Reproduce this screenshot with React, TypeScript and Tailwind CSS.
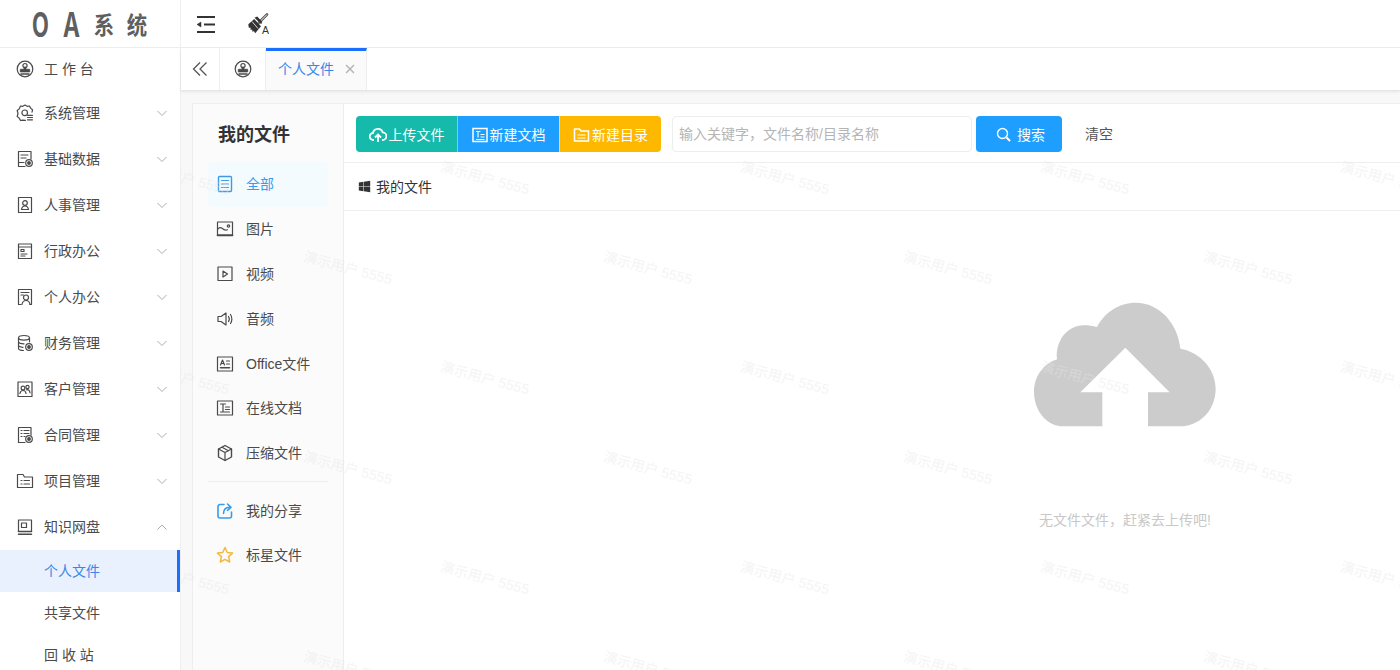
import type { ReactNode } from 'react';
import { FaWindows } from 'react-icons/fa';

const FONT = 'font-["Liberation_Sans","Noto_Sans_CJK_SC",sans-serif]';

function Ico({ children, size = 18, className = '' }: { children: ReactNode; size?: number; className?: string }) {
  return (
    <svg
      width={size}
      height={size}
      viewBox="0 0 18 18"
      fill="none"
      stroke="currentColor"
      strokeWidth="1.2"
      strokeLinecap="round"
      strokeLinejoin="round"
      className={`shrink-0 ${className}`}
    >
      {children}
    </svg>
  );
}

const HomeIcon = () => (
  <Ico>
    <circle cx="9" cy="9" r="7.8" />
    <circle cx="9" cy="5.600" r="2.100" />
    <path d="M8 7.500V9.300H4.300v2.600h9.400V9.300H10V7.500z" fill="currentColor" strokeWidth="0.800" />
    <path d="M5 14h8" strokeWidth="1.500" />
  </Ico>
);

const icons: Record<string, ReactNode> = {
  sys: (
    <Ico>
      <path d="M9.500 16.300l-3-.2-2 .4-1.300-2.400-2-1.600.8-3-.8-3 2-1.600L4.500 2l2.300.3L9 1l2.200 1.300L13.500 2l1.300 2.400 1.700 1.400-.5 2.400" />
      <circle cx="8.700" cy="8.800" r="2.800" />
      <path d="M11.500 11.300h5M11.500 13.500h5M11.500 15.800h5" />
    </Ico>
  ),
  base: (
    <Ico>
      <path d="M15 9V1.500H2.500v15H9" />
      <path d="M5 5h7M5 8h5M2.500 12.500H8" />
      <circle cx="13" cy="13" r="3.300" />
      <circle cx="13" cy="13" r="1.300" fill="currentColor" />
    </Ico>
  ),
  hr: (
    <Ico>
      <rect x="2.500" y="1.500" width="13" height="15" />
      <circle cx="9" cy="7" r="2.300" />
      <path d="M5.500 13.500c.4-2.500 1.800-3.500 3.500-3.500s3.100 1 3.500 3.500z" />
    </Ico>
  ),
  admin: (
    <Ico>
      <rect x="2.500" y="2" width="13" height="14.500" />
      <path d="M2.500 5h13" />
      <rect x="5" y="7.500" width="3" height="2" />
      <path d="M5 12h6M5 14h4" />
    </Ico>
  ),
  person: (
    <Ico>
      <path d="M5 16.500H2.500v-15h13v15H14" />
      <path d="M5 4.500h8M5 7h2.500" />
      <circle cx="10" cy="9.500" r="2.500" />
      <path d="M6 16.500c.4-2.500 2-4 4-4s3.600 1.500 4 4" />
    </Ico>
  ),
  finance: (
    <Ico>
      <ellipse cx="8" cy="3.800" rx="5.500" ry="2.300" />
      <path d="M2.500 3.800v10.400c0 1.200 2 2.200 5 2.300M13.500 3.800v4M2.500 7.500c0 1.200 2.400 2.300 5.500 2.300M2.500 11c0 1.200 1.900 2.100 4.500 2.300" />
      <circle cx="13" cy="13" r="3.300" />
      <circle cx="13" cy="13" r="1.300" fill="currentColor" />
    </Ico>
  ),
  customer: (
    <Ico>
      <rect x="2" y="2" width="14" height="14.500" />
      <circle cx="7" cy="8" r="1.900" />
      <circle cx="11.500" cy="7" r="1.600" />
      <path d="M4 13.500c.2-2 1.300-3 3-3s2.800 1 3 3M10.500 9.800c2-.5 3.300.8 3.500 3" />
    </Ico>
  ),
  contract: (
    <Ico>
      <path d="M15 9V1.500H2.500v15H9" />
      <path d="M5 4.500h1M8 4.500h5M5 7.500h1M8 7.500h5M5 10.500h1M8 10.500h1" />
      <circle cx="13" cy="13" r="3.300" />
      <circle cx="13" cy="13" r="1.300" fill="currentColor" />
    </Ico>
  ),
  project: (
    <Ico>
      <path d="M1.500 15.500V2.500h5.500l1.500 2.500h8v10.500z" />
      <path d="M5 8.500h1M8 8.500h5.500M5 12h1M8 12h5.500" />
    </Ico>
  ),
  disk: (
    <Ico>
      <path d="M2.500 13.500V2h13v11.500" />
      <rect x="5.500" y="5" width="5" height="4.500" />
      <path d="M2.500 13.500h13M2.500 16.300h13" strokeWidth="1.500" />
    </Ico>
  ),
  all: (
    <Ico>
      <rect x="2.500" y="1.500" width="13" height="15" rx="1" strokeWidth="1.400" />
      <path d="M5.500 5.500h7M5.500 9h7M5.500 12.500h7" />
    </Ico>
  ),
  image: (
    <Ico>
      <rect x="1.500" y="2" width="15" height="13" />
      <path d="M1.500 9.500c1.500-2 3-2.500 4.500-1.200s3 2.500 5.500 1.500" />
      <circle cx="12.500" cy="6" r="1.200" />
      <path d="M1.500 15.300h15" strokeWidth="1.800" />
    </Ico>
  ),
  video: (
    <Ico>
      <rect x="2" y="2" width="14" height="13.500" />
      <path d="M7 6l4.500 3L7 12z" />
    </Ico>
  ),
  audio: (
    <Ico>
      <path d="M2 6.500h3l5-3.500v12l-5-3.500H2z" />
      <path d="M12.500 6.500c1 1.500 1 3.500 0 5M14.500 4.500c1.800 2.500 1.800 6.500 0 9" />
    </Ico>
  ),
  office: (
    <Ico>
      <rect x="1.500" y="2" width="15" height="14" />
      <path d="M4.500 10l2-5 2 5M5.200 8.500h2.600M10.500 6h3M10.500 9h3" />
      <path d="M4.500 12.800h9" strokeWidth="1.600" />
    </Ico>
  ),
  online: (
    <Ico>
      <rect x="1.500" y="2" width="15" height="14" />
      <path d="M4.500 5h5M7 5v7M9.500 8h4M9.500 10.500h4M4.500 13h9" />
    </Ico>
  ),
  zip: (
    <Ico>
      <path d="M9 1.500l6.500 3.500v8L9 16.500 2.500 13V5z" strokeWidth="1.400" />
      <path d="M2.500 5L9 8.500 15.500 5M9 8.500v8M6 3.300l6.500 3.500" />
    </Ico>
  ),
  share: (
    <Ico>
      <path d="M8 2.500H4a2 2 0 0 0-2 2v9.500a2 2 0 0 0 2 2h9.500a2 2 0 0 0 2-2V10" strokeWidth="1.600" />
      <path d="M7.500 11.500c0-4 2-6 6-6.200M11.500 2l3.500 3.300-3.500 3" strokeWidth="1.600" />
    </Ico>
  ),
  star: (
    <Ico>
      <path d="M9 1.500l2.300 5 5.200.6-3.900 3.500 1.100 5.400L9 13.300 4.300 16l1.100-5.400L1.500 7.100l5.200-.6z" strokeWidth="1.500" />
    </Ico>
  ),
};

const menu = [
  { label: '系统管理', icon: 'sys' },
  { label: '基础数据', icon: 'base' },
  { label: '人事管理', icon: 'hr' },
  { label: '行政办公', icon: 'admin' },
  { label: '个人办公', icon: 'person' },
  { label: '财务管理', icon: 'finance' },
  { label: '客户管理', icon: 'customer' },
  { label: '合同管理', icon: 'contract' },
  { label: '项目管理', icon: 'project' },
];

const fileTypes = [
  { label: '图片', icon: 'image' },
  { label: '视频', icon: 'video' },
  { label: '音频', icon: 'audio' },
  { label: 'Office文件', icon: 'office' },
  { label: '在线文档', icon: 'online' },
  { label: '压缩文件', icon: 'zip' },
];

// watermark centres, relative to the content area under the tabs
const watermarks: { x: number; y: number }[] = [];
for (const y of [87, 287, 487]) {
  for (const x of [4, 304, 604, 904, 1204]) watermarks.push({ x, y });
}
for (const y of [177, 377, 577]) {
  for (const x of [167, 467, 767, 1067]) watermarks.push({ x, y });
}

function Chevron({ up = false }: { up?: boolean }) {
  return (
    <svg width="10" height="7" viewBox="0 0 10 7" fill="none" stroke="#a6adb5" strokeWidth="1" className="ml-auto">
      <path d={up ? 'M.5 5.500L5 1l4.500 4.500' : 'M.5 1L5 5.500 9.500 1'} />
    </svg>
  );
}

function ToolButton({ color, icon, label, className = '' }: { color: string; icon: ReactNode; label: string; className?: string }) {
  return (
    <button className={`flex h-9 items-center justify-center gap-[2px] pt-[2px] text-sm text-white ${color} ${className}`}>
      {icon}
      {label}
    </button>
  );
}

export default function App() {
  return (
    <div className={`flex h-[670px] w-[1400px] flex-col overflow-hidden bg-white text-[#4a4a4a] ${FONT}`}>
      {/* header */}
      <header className="flex h-12 shrink-0 items-center border-b border-[#eeeeee]">
        <div className="flex h-full w-[181px] shrink-0 items-center border-r border-[#eeeeee] pl-[26px] font-['Noto_Sans_CJK_SC',sans-serif] font-bold text-[#5f5f5f]">
          <span className="inline-block w-[29px] scale-x-[0.68] text-center text-[33px] leading-none">O</span>
          <span className="ml-[2px] inline-block w-[29px] scale-x-[0.75] text-center text-[33px] leading-none">A</span>
          <span className="ml-[6px] inline-block w-[24px] scale-x-[0.85] text-center text-[24px] leading-none">系</span>
          <span className="ml-[9px] inline-block w-[24px] scale-x-[0.85] text-center text-[24px] leading-none">统</span>
        </div>
        <svg width="20" height="18" viewBox="0 0 20 18" fill="none" stroke="#333" strokeWidth="2" className="ml-[15px]">
          <path d="M1 2h18M8 9.500h11M1 17h18" />
          <path d="M1 9.500L5 7v5z" fill="#333" strokeWidth="0.500" />
        </svg>
        <svg width="22" height="22" viewBox="0 0 22 22" className="ml-[31px]">
          <path d="M20 1.500l-8 8" stroke="#555" strokeWidth="2.600" strokeLinecap="round" fill="none" />
          <path d="M20 1.500l-8 8" stroke="#fff" strokeWidth="0.900" fill="none" />
          <path d="M7.500 4.800l2.700-1.300 5 5.300-1 2.400z" fill="#333" />
          <path d="M1.300 11.300L7.200 6l6.800 7.300-5.800 7-1.300-2.300-1.300 .9-.5-2.300-1.600.4.100-2.300-1.800 .1z" fill="#333" />
          <path d="M5 8.500l6 7" stroke="#fff" strokeWidth="0.800" fill="none" />
          <text x="15" y="20.500" fontSize="10.500" fill="#333" fontFamily="Liberation Sans, sans-serif">A</text>
        </svg>
      </header>

      <div className="flex min-h-0 flex-1">
        {/* sidebar */}
        <aside className="w-[181px] shrink-0 border-r border-[#eeeeee] text-sm">
          <div className="flex h-[42px] items-center pl-4">
            <HomeIcon />
            <span className="ml-[10px]">工 作 台</span>
          </div>
          {menu.map((m) => (
            <div key={m.label} className="flex h-[46px] items-center pl-4 pr-[13px]">
              {icons[m.icon]}
              <span className="ml-[10px]">{m.label}</span>
              <Chevron />
            </div>
          ))}
          <div className="flex h-[46px] items-center pl-4 pr-[13px]">
            {icons.disk}
            <span className="ml-[10px]">知识网盘</span>
            <Chevron up />
          </div>
          <div className="flex h-[42px] items-center border-r-[3px] border-[#1a6fff] bg-[#e8f1fd] pl-11 text-[#3b86e8]">个人文件</div>
          <div className="flex h-[42px] items-center pl-11">共享文件</div>
          <div className="flex h-[42px] items-center pl-11">回 收 站</div>
        </aside>

        {/* main */}
        <main className="flex min-w-0 flex-1 flex-col">
          <div className="z-10 flex h-[43px] shrink-0 items-stretch border-b border-[#e6e6e6] bg-white shadow-[0_1px_3px_rgba(0,0,0,0.08)]">
            <div className="flex w-[39px] items-center justify-center border-r border-[#eeeeee] text-[#555]">
              <svg width="16" height="16" viewBox="0 0 16 16" fill="none" stroke="currentColor" strokeWidth="1.300">
                <path d="M8 1.500L1.500 8 8 14.500M14.500 1.500L8 8l6.500 6.500" />
              </svg>
            </div>
            <div className="flex w-[46px] items-center justify-center border-r border-[#eeeeee]">
              <HomeIcon />
            </div>
            <div className="flex w-[101px] items-center border-r border-t-[3px] border-[#eeeeee] border-t-[#1a6fff] bg-[#fafafa] pb-[3px] pl-3 text-sm text-[#3b86e8]">
              个人文件
              <svg width="10" height="10" viewBox="0 0 10 10" stroke="#b5b5b5" strokeWidth="1.500" className="ml-[11px]">
                <path d="M1 1l8 8M9 1L1 9" />
              </svg>
            </div>
          </div>

          <div className="relative min-h-0 flex-1 overflow-hidden bg-[#f8f8f8] pl-[11px] pt-3">
            <div className="flex h-[600px] w-[1800px] border border-[#eeeeee] bg-white">
              {/* file types */}
              <div className="w-[151px] shrink-0 border-r border-[#eeeeee] bg-[#fbfbfb] px-[15px]">
                <div className="flex h-[58px] items-center pl-[10px] pt-1 text-lg font-bold text-[#333]">我的文件</div>
                <div className="flex h-[44.800px] items-center rounded-sm bg-[#f4fbff] pl-[8px] text-sm text-[#3c9be8]">
                  {icons.all}
                  <span className="ml-[12px]">全部</span>
                </div>
                {fileTypes.map((f) => (
                  <div key={f.label} className="flex h-[44.800px] items-center pl-[8px] text-sm">
                    {icons[f.icon]}
                    <span className="ml-[12px]">{f.label}</span>
                  </div>
                ))}
                <div className="mb-[7px] mt-[5px] border-t border-[#eeeeee]" />
                <div className="flex h-[44px] items-center pl-[8px] text-sm">
                  <span className="text-[#3c9be8]">{icons.share}</span>
                  <span className="ml-[12px] text-[#4a4a4a]">我的分享</span>
                </div>
                <div className="flex h-[44px] items-center pl-[8px] text-sm">
                  <span className="text-[#f5b83d]">{icons.star}</span>
                  <span className="ml-[12px] text-[#4a4a4a]">标星文件</span>
                </div>
              </div>

              {/* files */}
              <div className="w-[1562px] shrink-0">
                <div className="flex h-[59px] items-center border-b border-[#eeeeee] pl-3 pt-[2px]">
                  <ToolButton
                    color="bg-[#16baaa]"
                    className="w-[101px] rounded-l-sm"
                    label="上传文件"
                    icon={
                      <svg width="18" height="16" viewBox="0 0 18 16" fill="none" stroke="white" strokeWidth="1.800">
                        <path d="M5 13H4.500a3.500 3.500 0 0 1-.5-7 5 5 0 0 1 9.700-.6A3.800 3.800 0 0 1 13.500 13H13" />
                        <path d="M9 15V8M6 10.500L9 7.500l3 3" />
                      </svg>
                    }
                  />
                  <ToolButton
                    color="bg-[#1e9fff]"
                    className="w-[102px] border-l border-white/40"
                    label="新建文档"
                    icon={
                      <svg width="16" height="16" viewBox="0 0 16 16" fill="none" stroke="white" strokeWidth="1.500">
                        <rect x="1" y="1.500" width="14" height="13" />
                        <path d="M4 4.500h4.500M6 4.500v6M8.500 7.500h4M8.500 10h4M4 12.500h8.500" strokeWidth="1.100" />
                      </svg>
                    }
                  />
                  <ToolButton
                    color="bg-[#ffb800]"
                    className="w-[102px] rounded-r-sm border-l border-white/40"
                    label="新建目录"
                    icon={
                      <svg width="17" height="16" viewBox="0 0 17 16" fill="none" stroke="white" strokeWidth="1.500">
                        <path d="M1.500 14V2h5l1.500 2h7.500v10z" />
                        <path d="M4.500 8h8M4.500 11h8" strokeWidth="1.100" />
                      </svg>
                    }
                  />
                  <input
                    placeholder="输入关键字，文件名称/目录名称"
                    className="ml-[11px] h-9 w-[300px] rounded-sm border border-[#eeeeee] bg-white pl-[6px] text-sm placeholder-[#b5b5b5] outline-none"
                  />
                  <button className="ml-1 flex h-9 w-[86px] items-center rounded-sm bg-[#1e9fff] pl-[20px] pt-[1px] text-sm text-white">
                    <svg width="15" height="15" viewBox="0 0 15 15" fill="none" stroke="white" strokeWidth="1.400">
                      <circle cx="6.500" cy="6.500" r="5" />
                      <path d="M10.500 10.500L14 14" strokeWidth="2" />
                    </svg>
                    <span className="ml-[6px]">搜索</span>
                  </button>
                  <span className="ml-[23px] text-sm text-[#555]">清空</span>
                </div>
                <div className="flex h-12 items-center border-b border-[#eeeeee] pl-[14px] text-sm text-[#333]">
                  <FaWindows size={13} className="text-[#333]" />
                  <span className="ml-[5px]">我的文件</span>
                </div>
                <div className="flex flex-col items-center pt-[91px]">
                  <svg width="184" height="125.300" viewBox="70 35 552 376" fill="#cccccc">
                    <path d="M160 408C110 408 73 360 73 305C73 258 102 220 142 207C136 150 175 105 222 105C236 105 250 107 262 110C285 65 330 37 378 37C450 37 505 100 512 175C570 185 618 235 618 295C618 360 570 408 510 408H415V306H480L347 172L212 306H278V408Z" />
                  </svg>
                  <p className="mt-[83px] text-sm text-[#c8c8c8]">无文件文件，赶紧去上传吧!</p>
                </div>
              </div>
            </div>

            {/* watermark */}
            <div className="pointer-events-none absolute inset-0 overflow-hidden">
              {watermarks.map((w) => (
                <span
                  key={`${w.x}-${w.y}`}
                  style={{ left: w.x, top: w.y }}
                  className="absolute -translate-x-1/2 -translate-y-1/2 rotate-[15deg] whitespace-nowrap text-sm text-[#e6e6e6] opacity-40"
                >
                  演示用户 5555
                </span>
              ))}
            </div>
          </div>
        </main>
      </div>
    </div>
  );
}
